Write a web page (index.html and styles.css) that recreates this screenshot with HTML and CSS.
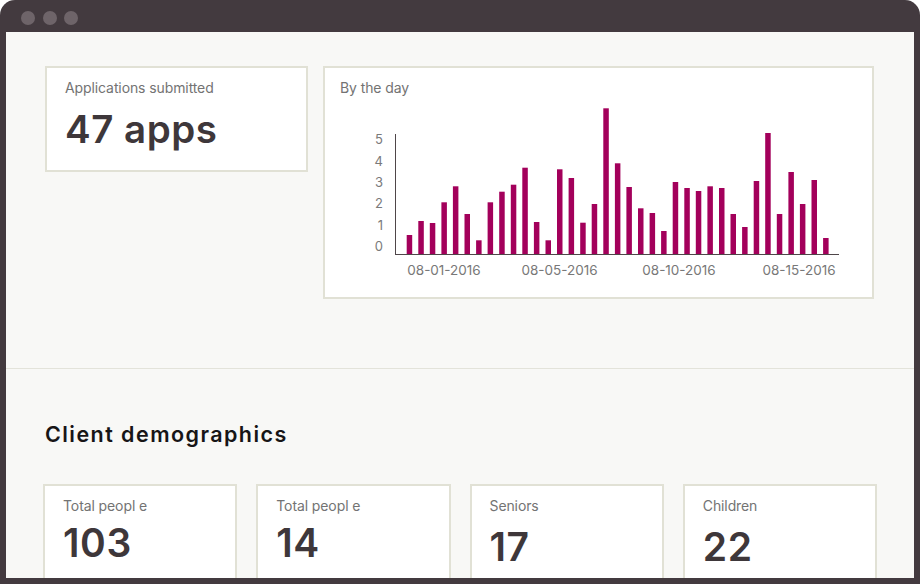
FILE: index.html
```html
<!DOCTYPE html>
<html lang="en">
<head>
<meta charset="utf-8">
<title>Dashboard</title>
<link rel="stylesheet" href="styles.css">
</head>
<body>
<div class="window">
  <div class="titlebar">
    <span class="dot"></span><span class="dot"></span><span class="dot"></span>
  </div>
  <div class="content">
    <section class="overview">
      <div class="card summary-card">
        <div class="card-label">Applications submitted</div>
        <div class="summary-value">47 apps</div>
      </div>
      <div class="card chart-card">
        <div class="card-label chart-title">By the day</div>
        <svg class="chart" width="547" height="199" viewBox="325 98 547 199" xmlns="http://www.w3.org/2000/svg">
          <g class="y-labels" text-anchor="end">
            <text x="383" y="144.3">5</text>
            <text x="383" y="165.7">4</text>
            <text x="383" y="187">3</text>
            <text x="383" y="208.4">2</text>
            <text x="383" y="229.7">1</text>
            <text x="383" y="251">0</text>
          </g>
          <g class="bars">
            <rect x="406.7" y="235" width="5.5" height="19"/>
            <rect x="418.3" y="221" width="5.5" height="33"/>
            <rect x="429.8" y="223" width="5.5" height="31"/>
            <rect x="441.4" y="202.3" width="5.5" height="51.7"/>
            <rect x="452.9" y="186.3" width="5.5" height="67.7"/>
            <rect x="464.5" y="214" width="5.5" height="40"/>
            <rect x="476.1" y="240.3" width="5.5" height="13.7"/>
            <rect x="487.6" y="202.3" width="5.5" height="51.7"/>
            <rect x="499.2" y="191.7" width="5.5" height="62.3"/>
            <rect x="510.8" y="184.7" width="5.5" height="69.3"/>
            <rect x="522.3" y="167.7" width="5.5" height="86.3"/>
            <rect x="533.9" y="222" width="5.5" height="32"/>
            <rect x="545.5" y="240.3" width="5.5" height="13.7"/>
            <rect x="557.0" y="169.3" width="5.5" height="84.7"/>
            <rect x="568.6" y="178" width="5.5" height="76"/>
            <rect x="580.2" y="222.7" width="5.5" height="31.3"/>
            <rect x="591.7" y="204" width="5.5" height="50"/>
            <rect x="603.3" y="108.3" width="5.5" height="145.7"/>
            <rect x="614.9" y="163.3" width="5.5" height="90.7"/>
            <rect x="626.4" y="187" width="5.5" height="67"/>
            <rect x="638.0" y="208.3" width="5.5" height="45.7"/>
            <rect x="649.6" y="213" width="5.5" height="41"/>
            <rect x="661.1" y="231" width="5.5" height="23"/>
            <rect x="672.7" y="182" width="5.5" height="72"/>
            <rect x="684.3" y="188" width="5.5" height="66"/>
            <rect x="695.8" y="191" width="5.5" height="63"/>
            <rect x="707.4" y="186.3" width="5.5" height="67.7"/>
            <rect x="719.0" y="188" width="5.5" height="66"/>
            <rect x="730.5" y="214" width="5.5" height="40"/>
            <rect x="742.1" y="227" width="5.5" height="27"/>
            <rect x="753.7" y="181" width="5.5" height="73"/>
            <rect x="765.2" y="133" width="5.5" height="121"/>
            <rect x="776.8" y="214" width="5.5" height="40"/>
            <rect x="788.4" y="172" width="5.5" height="82"/>
            <rect x="799.9" y="204" width="5.5" height="50"/>
            <rect x="811.5" y="180" width="5.5" height="74"/>
            <rect x="823.1" y="238" width="5.5" height="16"/>
          </g>
          <g class="axes">
            <line x1="395.5" y1="134" x2="395.5" y2="254.5"/>
            <line x1="395" y1="254.5" x2="839" y2="254.5"/>
          </g>
          <g class="x-labels" text-anchor="middle">
            <text x="444" y="275">08-01-2016</text>
            <text x="559.5" y="275">08-05-2016</text>
            <text x="679" y="275">08-10-2016</text>
            <text x="799" y="275">08-15-2016</text>
          </g>
        </svg>
      </div>
    </section>
    <section class="demographics">
      <h2 class="section-title">Client demographics</h2>
      <div class="stat-grid">
        <div class="card stat-card">
          <div class="card-label">Total peopl e</div>
          <div class="stat-value">103</div>
        </div>
        <div class="card stat-card">
          <div class="card-label">Total peopl e</div>
          <div class="stat-value">14</div>
        </div>
        <div class="card stat-card stat-card--low">
          <div class="card-label">Seniors</div>
          <div class="stat-value">17</div>
        </div>
        <div class="card stat-card stat-card--low">
          <div class="card-label">Children</div>
          <div class="stat-value">22</div>
        </div>
      </div>
    </section>
  </div>
</div>
</body>
</html>
```

FILE: styles.css
```css
html, body {
  margin: 0;
  padding: 0;
  background: #ffffff;
}

body {
  font-family: Inter, Roboto, "Liberation Sans", Arial, sans-serif;
  overflow: hidden;
}

.window {
  width: 920px;
  height: 584px;
  box-sizing: border-box;
  background: #433a3f;
  border-radius: 15px 15px 0 0;
  padding: 0 6px 6px;
  display: flex;
  flex-direction: column;
  overflow: hidden;
}

.titlebar {
  height: 32px;
  box-sizing: border-box;
  padding: 11px 0 0 15px;
  display: flex;
  align-items: flex-start;
  gap: 7.5px;
  flex: none;
}

.dot {
  width: 14px;
  height: 14px;
  border-radius: 50%;
  background: #6e6469;
}

.content {
  flex: 1;
  background: #f8f8f6;
  overflow: hidden;
}

.card {
  background: #ffffff;
  border: 2px solid #e1e1d5;
  box-sizing: border-box;
}

.card-label {
  font-size: 14px;
  line-height: 20px;
  letter-spacing: -0.1px;
  color: #737373;
}

/* Overview */
.overview {
  display: flex;
  align-items: flex-start;
  gap: 15px;
  padding: 34px 40px 69px 39px;
  border-bottom: 1px solid #e3e3da;
}

.summary-card {
  width: 263px;
  padding: 10px 18px 18px;
}

.summary-value {
  margin-top: 8px;
  font-size: 38.5px;
  line-height: 46px;
  font-weight: 600;
  letter-spacing: 0.5px;
  color: #3e373a;
}

.chart-card {
  width: 551px;
  padding: 10px 0 0;
}

.chart-title {
  padding-left: 15px;
}

.chart {
  display: block;
}

.chart .y-labels text {
  font-family: Inter, Roboto, sans-serif;
  font-size: 13px;
  fill: #7a7a7a;
}

.chart .x-labels text {
  font-family: Inter, Roboto, sans-serif;
  font-size: 13.5px;
  fill: #787878;
}

.chart .bars rect {
  fill: #a3005b;
}

.chart .axes line {
  stroke: #4f4649;
  stroke-width: 1;
}

/* Demographics */
.demographics {
  padding: 51px 37px 0;
}

.section-title {
  margin: 0 0 36px 2px;
  font-size: 21.5px;
  line-height: 28px;
  font-weight: 600;
  letter-spacing: 1.45px;
  color: #171516;
}

.stat-grid {
  display: grid;
  grid-template-columns: repeat(4, 1fr);
  gap: 19px;
}

.stat-card {
  padding: 10px 18px 18px;
}

.stat-value {
  margin-top: 4px;
  font-size: 39px;
  line-height: 46px;
  font-weight: 600;
  letter-spacing: 0.6px;
  color: #3e373a;
}

.stat-card--low .stat-value {
  margin-top: 8px;
}
```
